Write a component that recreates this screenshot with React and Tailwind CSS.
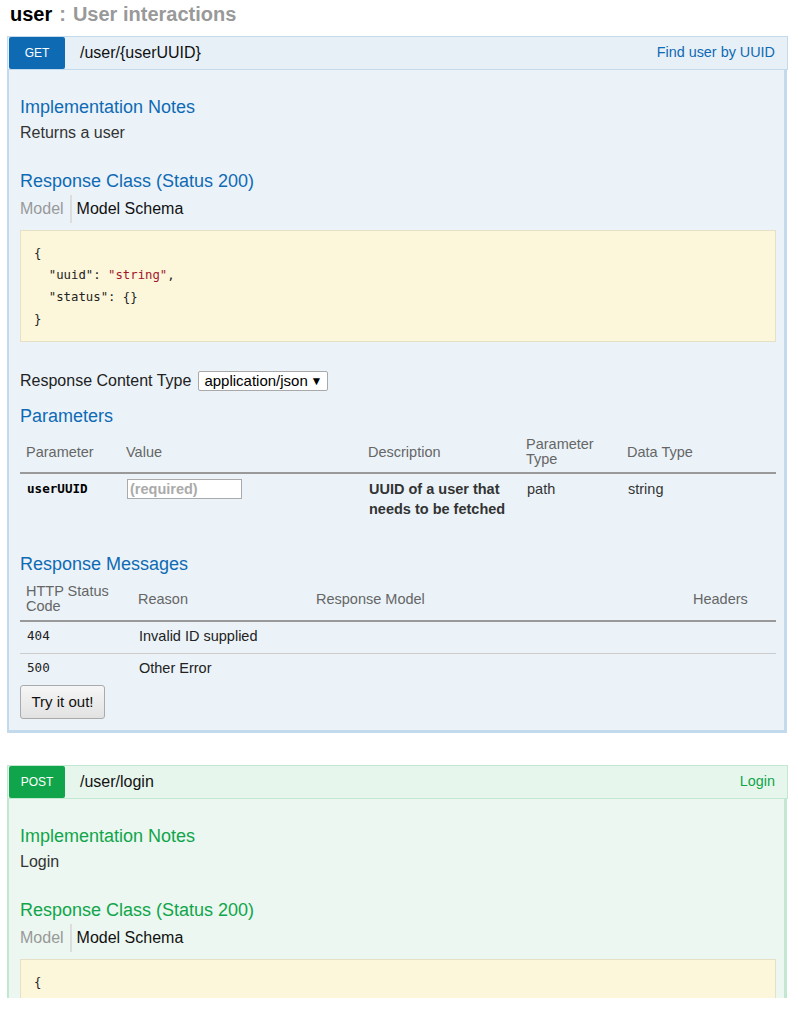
const themes = {
  get: {
    headBg: "bg-[#e7f0f7]",
    headBorder: "border-[#c3d9ec]",
    badge: "bg-[#0f6ab4]",
    accent: "text-[#0f6ab4]",
    bodyBg: "bg-[#ebf3f9]",
    bodyBorder: "border-[#c3d9ec]",
  },
  post: {
    headBg: "bg-[#e7f6ec]",
    headBorder: "border-[#c3e8d1]",
    badge: "bg-[#10a54a]",
    accent: "text-[#10a54a]",
    bodyBg: "bg-[#ebf7f0]",
    bodyBorder: "border-[#c3e8d1]",
  },
};

const sans = "font-['Liberation_Sans',Arial,sans-serif]";
const mono = "font-['DejaVu_Sans_Mono','Liberation_Mono',monospace]";

function Schema({ t }) {
  return (
    <>
      <h4 className={`mt-[27px] text-[18px] leading-[22px] ${t.accent}`}>Response Class (Status 200)</h4>
      <div className="mt-[3px] flex h-[28px] items-center text-[16px]">
        <span className="pr-[6px] text-[#999]">Model</span>
        <span className="h-full border-l-2 border-[#ddd]" />
        <span className="pl-[5px] text-[#111]">Model Schema</span>
      </div>
      <pre
        className={`mt-[7px] border border-[#e5e0c6] bg-[#fcf6db] pt-[11px] pb-[11px] pl-[13px] text-[12.3px] leading-[22px] text-[#222] ${mono}`}
      >
        {"{\n"}
        {'  "uuid": '}
        <span className="text-[#a3152b]">"string"</span>
        {",\n"}
        {'  "status": {}\n'}
        {"}"}
      </pre>
    </>
  );
}

function Operation({ kind, method, path, summary, notes, children }) {
  const t = themes[kind];
  return (
    <div className="w-[781px]">
      <div className={`flex h-[34px] items-center border ${t.headBorder} ${t.headBg}`}>
        <span
          className={`ml-px flex h-[32px] w-[56px] items-center justify-center rounded-[2px] text-[12px] text-white ${t.badge}`}
        >
          {method}
        </span>
        <span className="ml-[15px] text-[16px] text-[#111]">{path}</span>
        <span className={`ml-auto mr-[12px] text-[14.4px] ${t.accent}`}>{summary}</span>
      </div>
      <div
        className={`w-[780px] border-l-2 border-r-[3px] border-b-[3px] pl-[11px] pr-[8px] pt-[26px] pb-[11px] ${t.bodyBorder} ${t.bodyBg}`}
      >
        <h4 className={`text-[18px] leading-[22px] ${t.accent}`}>Implementation Notes</h4>
        <p className="mt-[5px] text-[16px] leading-[20px] text-[#333]">{notes}</p>
        <Schema t={t} />
        {children}
      </div>
    </div>
  );
}

function UserDetails() {
  const t = themes.get;
  return (
    <>
      <div className="mt-[29px] flex h-[20px] items-center text-[16px] text-[#222]">
        <span>Response Content Type</span>
        <span className="ml-[7px] flex h-[20px] w-[130px] items-center justify-between rounded-[2px] border border-[#a9a9a9] bg-white pl-[5px] pr-[5px] text-[15px] text-black">
          application/json
          <span className="text-[12px]">▼</span>
        </span>
      </div>

      <h4 className={`mt-[14px] text-[18px] leading-[22px] ${t.accent}`}>Parameters</h4>
      <div className="grid grid-cols-[100px_242px_158px_101px_1fr] text-[14.5px]">
        <div className="col-span-5 grid grid-cols-subgrid items-center border-b-2 border-[#999] pt-[10px] pb-[5px] leading-[15px] text-[#666]">
          <span className="pl-[6px]">Parameter</span>
          <span className="pl-[6px]">Value</span>
          <span className="pl-[6px]">Description</span>
          <span className="pl-[6px]">
            Parameter
            <br />
            Type
          </span>
          <span className="pl-[6px]">Data Type</span>
        </div>
        <div className="col-span-5 grid grid-cols-subgrid items-start pt-[5px] pb-[11px] leading-[20px] text-[#333]">
          <span className={`pl-[7px] text-[12.6px] font-bold text-black ${mono}`}>userUUID</span>
          <span className="pl-[7px]">
            <input
              placeholder="(required)"
              className="h-[20px] w-[115px] border border-[#aaa] bg-white px-[2px] text-[14.5px] font-bold placeholder:text-[#aaa]"
            />
          </span>
          <span className="pl-[7px] font-bold">UUID of a user that needs to be fetched</span>
          <span className="pl-[7px]">path</span>
          <span className="pl-[7px]">string</span>
        </div>
      </div>

      <h4 className={`mt-[23px] text-[18px] leading-[22px] ${t.accent}`}>Response Messages</h4>
      <div className="grid grid-cols-[112px_178px_377px_1fr] text-[14.5px]">
        <div className="col-span-4 grid grid-cols-subgrid items-center border-b-2 border-[#999] pt-[9px] pb-[6px] leading-[15px] text-[#666]">
          <span className="pl-[6px]">
            HTTP Status
            <br />
            Code
          </span>
          <span className="pl-[6px]">Reason</span>
          <span className="pl-[6px]">Response Model</span>
          <span className="pl-[6px]">Headers</span>
        </div>
        {[
          ["404", "Invalid ID supplied"],
          ["500", "Other Error"],
        ].map(([code, reason], i) => (
          <div
            key={code}
            className={`col-span-4 grid grid-cols-subgrid items-center pt-[4px] pb-[7px] leading-[20px] text-[#222] ${
              i === 0 ? "border-b border-[#ccc]" : ""
            }`}
          >
            <span className={`pl-[7px] text-[12.6px] ${mono}`}>{code}</span>
            <span className="pl-[7px]">{reason}</span>
            <span />
            <span />
          </div>
        ))}
      </div>
      <button className="h-[34px] w-[85px] rounded-[3px] border border-[#aaa] bg-gradient-to-b from-[#f6f6f6] to-[#e2e2e2] text-[15px] text-[#111]">
        Try it out!
      </button>
    </>
  );
}

export default function App() {
  return (
    <div className={`h-[998px] overflow-hidden bg-white ${sans}`}>
      <h2 className="h-[28px] pl-[10px] text-[20px] font-bold leading-[28px]">
        <span className="text-black">user</span>
        <span className="pl-[7px] text-[#999]">:</span>
        <span className="pl-[7px] text-[#999]">User interactions</span>
      </h2>
      <div className="mt-[8px] pl-[7px]">
        <Operation kind="get" method="GET" path="/user/{userUUID}" summary="Find user by UUID" notes="Returns a user">
          <UserDetails />
        </Operation>
        <div className="h-[32px]" />
        <Operation kind="post" method="POST" path="/user/login" summary="Login" notes="Login" />
      </div>
    </div>
  );
}
